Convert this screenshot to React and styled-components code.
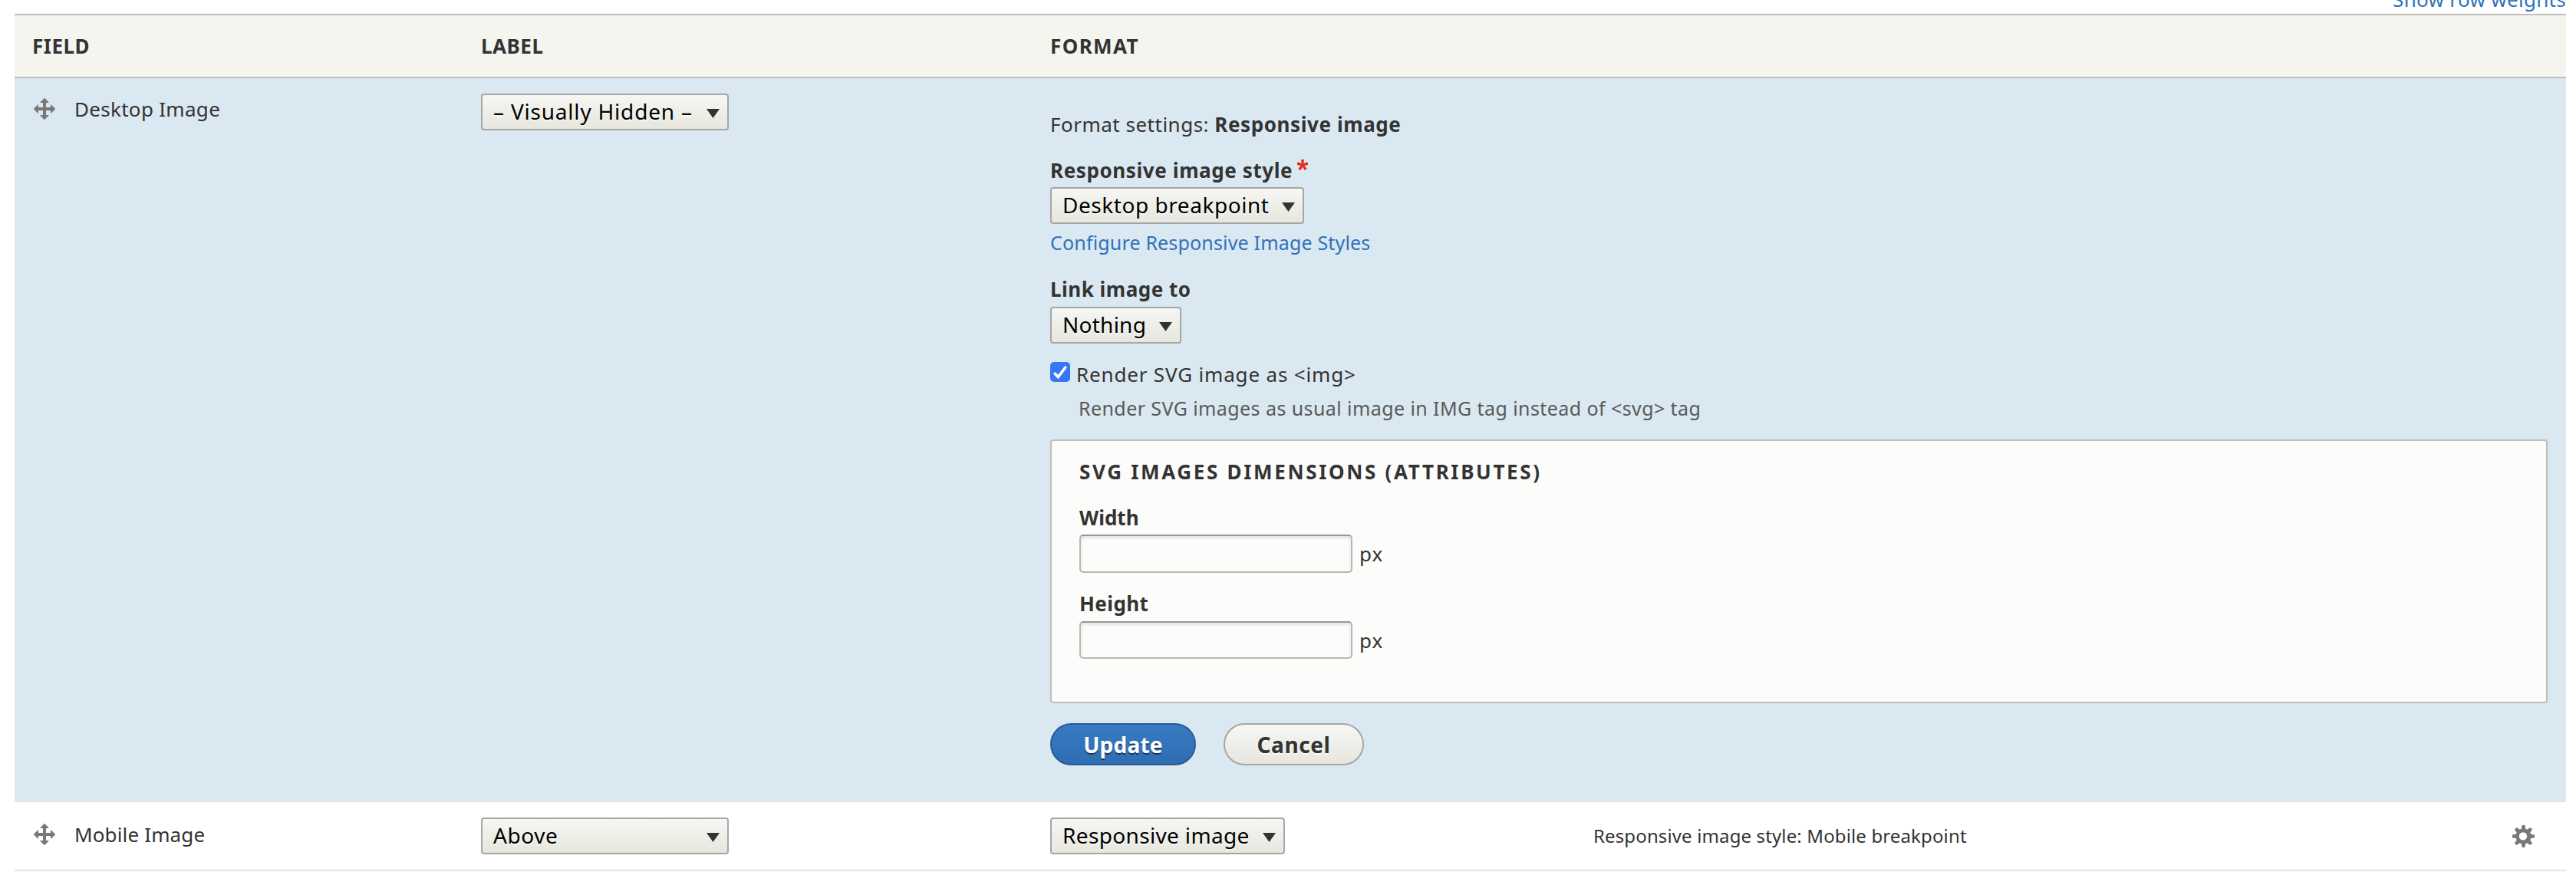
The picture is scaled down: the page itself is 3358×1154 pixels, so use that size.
import React from 'react';
import styled, { createGlobalStyle } from 'styled-components';

const GlobalStyle = createGlobalStyle`
  * { box-sizing: border-box; }
  body {
    margin: 0;
    background: #fff;
    color: #333;
    font-family: "Noto Sans", "Open Sans", sans-serif;
    font-size: 26px;
    line-height: 36px;
  }
`;

const Page = styled.div`
  width: 3358px;
  height: 1154px;
  padding: 0 13px 0 19px;
  overflow: hidden;
`;

const Toolbar = styled.div`
  height: 18px;
  display: flex;
  justify-content: flex-end;
  align-items: flex-end;
  padding-bottom: 2px;
  overflow: hidden;
`;

const Text = styled.span`
  letter-spacing: ${(p) => p.$track || 0}px;
  white-space: pre;
`;

const Strong = styled(Text)`
  font-weight: 700;
`;

const Link = styled.a`
  color: #2f72b9;
  font-size: ${(p) => p.$size}px;
  line-height: 34px;
  letter-spacing: ${(p) => p.$track}px;
  text-decoration: none;
  white-space: pre;
`;

const Row = styled.div`
  display: grid;
  grid-template-columns: 608px 742px 708px 1fr;
  border-bottom: 2px solid #e6e4df;
  background: ${(p) => (p.$active ? '#dae8f1' : '#fff')};
  height: ${(p) => p.$height}px;
`;

const HeadRow = styled(Row)`
  align-items: center;
  height: 84px;
  background: #f5f5f0;
  border-top: 2px solid #bebfb9;
  border-bottom-color: #bebfb9;
`;

const HeadCell = styled(Strong)`
  padding-left: ${(p) => p.$indent || 0}px;
`;

const NameCell = styled.div`
  display: flex;
  align-items: center;
  gap: 23px;
  height: 40px;
  margin-top: ${(p) => p.$top}px;
  padding-left: 23px;
`;

const Cell = styled.div`
  padding-top: 20px;
`;

const SelectBox = styled.div`
  display: flex;
  align-items: center;
  justify-content: space-between;
  width: ${(p) => p.$width}px;
  height: 48px;
  padding: 0 10px 2px 14px;
  border: 2px solid #a6a6a6;
  border-radius: 4px;
  background: linear-gradient(#f6f6f3, #e7e7df);
  color: #000;
  font-size: 28px;
  text-shadow: 0 2px 0 rgba(255, 255, 255, 0.6);
`;

const Arrow = styled.svg`
  width: 17px;
  height: 12px;
  margin-top: 6px;
`;

const SettingsForm = styled.div`
  grid-column: 3 / -1;
  display: flex;
  flex-direction: column;
  align-items: flex-start;
  padding: 42px 24px 0 0;
`;

const Item = styled.div`
  display: flex;
  flex-direction: column;
  align-items: flex-start;
  margin-top: ${(p) => p.$top}px;
`;

const FieldLabel = styled.div`
  display: flex;
  gap: 6px;
  height: 36px;
  margin-bottom: ${(p) => p.$gap || 4}px;
`;

const Required = styled.svg`
  width: 14px;
  height: 14px;
  margin-top: 4px;
`;

const HelpLink = styled.div`
  height: 34px;
  margin-top: 7px;
  display: flex;
`;

const CheckRow = styled.div`
  display: flex;
  align-items: flex-start;
  gap: 8px;
  margin-top: 22px;
`;

const CheckIcon = styled.svg`
  width: 26px;
  height: 26px;
  margin-top: 2px;
`;

const Description = styled.div`
  margin: 9px 0 0 37px;
  color: #595959;
  font-size: 25px;
  line-height: 34px;
`;

const Fieldset = styled.div`
  align-self: stretch;
  height: 344px;
  margin-top: 24px;
  padding: 22px 36px;
  border: 2px solid #bfbfba;
  border-radius: 4px;
  background: #fcfcfa;
`;

const InputRow = styled.div`
  display: flex;
  align-items: center;
  gap: 9px;
`;

const Input = styled.input`
  width: 356px;
  height: ${(p) => p.$height}px;
  margin: 0;
  border: 2px solid #b8b8b4;
  border-top-color: #999;
  border-radius: 5px;
  background: #fcfcfa;
  box-shadow: inset 0 2px 4px rgba(0, 0, 0, 0.125);
  outline: none;
`;

const Actions = styled.div`
  display: flex;
  gap: 36px;
  margin-top: 26px;
`;

const Button = styled.button`
  display: flex;
  align-items: center;
  justify-content: center;
  width: ${(p) => p.$width}px;
  height: 55px;
  margin: 0;
  padding: 0;
  border: 2px solid ${(p) => (p.$primary ? '#2b5a93' : '#a6a6a6')};
  border-radius: 28px;
  background: ${(p) => (p.$primary ? 'linear-gradient(#367bc3, #2f6db1)' : 'linear-gradient(#f6f6f3, #e7e7df)')};
  color: ${(p) => (p.$primary ? '#fff' : '#333')};
  font-family: inherit;
  font-size: 28px;
  font-weight: 700;
  letter-spacing: ${(p) => p.$track}px;
  text-shadow: 0 2px 0 ${(p) => (p.$primary ? 'rgba(0, 0, 0, 0.5)' : 'rgba(255, 255, 255, 0.6)')};
`;

const SummaryCell = styled.div`
  display: flex;
  justify-content: space-between;
  align-items: flex-start;
  padding: 26px 40px 0 0;
  font-size: 24px;
`;

const Icon = styled.svg`
  width: 32px;
  height: 32px;
  flex: none;
  fill: #787878;
`;

const GearIcon = styled(Icon)`
  margin-top: 2px;
`;

const MoveIcon = () => (
  <Icon viewBox="0 0 16 16">
    <path d="M14.904 7.753l-2.373-2.372c-.291-.292-.529-.193-.529.22v1.399h-3v-3h1.398c.413 0 .512-.239.22-.529l-2.371-2.372c-.137-.136-.36-.136-.497 0l-2.372 2.372c-.292.292-.193.529.22.529h1.4v3h-3v-1.369c0-.413-.239-.512-.529-.22l-2.372 2.372c-.136.136-.136.359 0 .494l2.372 2.372c.291.292.529.192.529-.219v-1.43h3v3h-1.4c-.413 0-.511.238-.22.529l2.374 2.373c.137.137.36.137.495 0l2.373-2.373c.29-.291.19-.529-.222-.529h-1.398v-3h3v1.4c0 .412.238.511.529.219l2.373-2.371c.137-.137.137-.359 0-.495z" />
  </Icon>
);

const Gear = () => (
  <GearIcon viewBox="0 0 16 16">
    <path
      fillRule="evenodd"
      d="M15.426 9.249c.045-.327.076-.658.076-.998 0-.36-.035-.71-.086-1.056l-2.275-.293c-.115-.426-.283-.827-.498-1.201l1.396-1.808c-.416-.551-.906-1.039-1.459-1.452l-1.807 1.391c-.373-.215-.774-.383-1.2-.499l-.292-2.252c-.338-.048-.677-.081-1.029-.081s-.694.033-1.032.082l-.291 2.251c-.426.116-.826.284-1.2.499l-1.805-1.391c-.552.413-1.044.901-1.459 1.452l1.395 1.808c-.215.374-.383.774-.499 1.2l-2.276.294c-.05.346-.085.696-.085 1.056 0 .34.031.671.077.998l2.285.295c.115.426.284.826.499 1.2l-1.417 1.836c.411.55.896 1.038 1.443 1.452l1.842-1.42c.374.215.774.383 1.2.498l.298 2.311c.337.047.677.08 1.025.08s.688-.033 1.021-.08l.299-2.311c.426-.115.826-.283 1.201-.498l1.842 1.42c.547-.414 1.031-.902 1.443-1.452l-1.416-1.837c.215-.373.383-.773.498-1.199l2.286-.295zM8 5.6a2.6 2.6 0 1 0 0 5.2a2.6 2.6 0 1 0 0-5.2z"
    />
  </GearIcon>
);

const Star = () => (
  <Required viewBox="-7 -7.2 14 14">
    {[0, 72, 144, 216, 288].map((angle) => (
      <polygon key={angle} points="-1.9,-7.2 1.9,-7.2 1.2,0.8 -1.2,0.8" fill="#e62b1e" transform={`rotate(${angle})`} />
    ))}
  </Required>
);

const Select = ({ width, track, children }) => (
  <SelectBox $width={width}>
    <Text $track={track}>{children}</Text>
    <Arrow viewBox="0 0 17 12">
      <path d="M0 0H17L8.5 12Z" fill="#333" />
    </Arrow>
  </SelectBox>
);

export default function App() {
  return (
    <Page>
      <GlobalStyle />
      <Toolbar>
        <Link $size={26} $track={0.3}>Show row weights</Link>
      </Toolbar>
      <HeadRow>
        <HeadCell $track={0.5} $indent={23}>FIELD</HeadCell>
        <HeadCell $track={0.5}>LABEL</HeadCell>
        <HeadCell $track={1.4}>FORMAT</HeadCell>
      </HeadRow>

      <Row $active $height={944}>
        <NameCell $top={20}>
          <MoveIcon />
          <Text $track={0.3}>Desktop Image</Text>
        </NameCell>
        <Cell>
          <Select width={323} track={0.8}>– Visually Hidden –</Select>
        </Cell>
        <SettingsForm>
          <div>
            <Text $track={0.5}>Format settings: </Text>
            <Strong $track={0.58}>Responsive image</Strong>
          </div>
          <Item $top={24}>
            <FieldLabel>
              <Strong $track={0.6}>Responsive image style</Strong>
              <Star />
            </FieldLabel>
            <Select width={331} track={0.55}>Desktop breakpoint</Select>
            <HelpLink>
              <Link $size={25} $track={0.17}>Configure Responsive Image Styles</Link>
            </HelpLink>
          </Item>
          <Item $top={26}>
            <FieldLabel $gap={5}>
              <Strong $track={0.5}>Link image to</Strong>
            </FieldLabel>
            <Select width={171} track={0.25}>Nothing</Select>
          </Item>
          <CheckRow>
            <CheckIcon viewBox="0 0 26 26">
              <rect width="26" height="26" rx="5" fill="#3478f6" />
              <path d="M5.2 14.2L10.4 19.6L20.6 6" fill="none" stroke="#fff" strokeWidth="3.6" />
            </CheckIcon>
            <Text $track={0.83}>{'Render SVG image as <img>'}</Text>
          </CheckRow>
          <Description>
            <Text $track={0.42}>{'Render SVG images as usual image in IMG tag instead of <svg> tag'}</Text>
          </Description>
          <Fieldset>
            <Strong $track={2.67}>SVG IMAGES DIMENSIONS (ATTRIBUTES)</Strong>
            <Item $top={24}>
              <FieldLabel>
                <Strong>Width</Strong>
              </FieldLabel>
              <InputRow>
                <Input $height={50} />
                <Text $track={1}>px</Text>
              </InputRow>
            </Item>
            <Item $top={22}>
              <FieldLabel $gap={5}>
                <Strong $track={0.4}>Height</Strong>
              </FieldLabel>
              <InputRow>
                <Input $height={49} />
                <Text $track={1}>px</Text>
              </InputRow>
            </Item>
          </Fieldset>
          <Actions>
            <Button $primary $width={190} $track={0.25}>Update</Button>
            <Button $width={183} $track={0.6}>Cancel</Button>
          </Actions>
        </SettingsForm>
      </Row>

      <Row $height={90}>
        <NameCell $top={22}>
          <MoveIcon />
          <Text $track={0.15}>Mobile Image</Text>
        </NameCell>
        <Cell>
          <Select width={323} track={0.6}>Above</Select>
        </Cell>
        <Cell>
          <Select width={306} track={0.35}>Responsive image</Select>
        </Cell>
        <SummaryCell>
          <Text $track={0.13}>Responsive image style: Mobile breakpoint</Text>
          <Gear />
        </SummaryCell>
      </Row>
    </Page>
  );
}
